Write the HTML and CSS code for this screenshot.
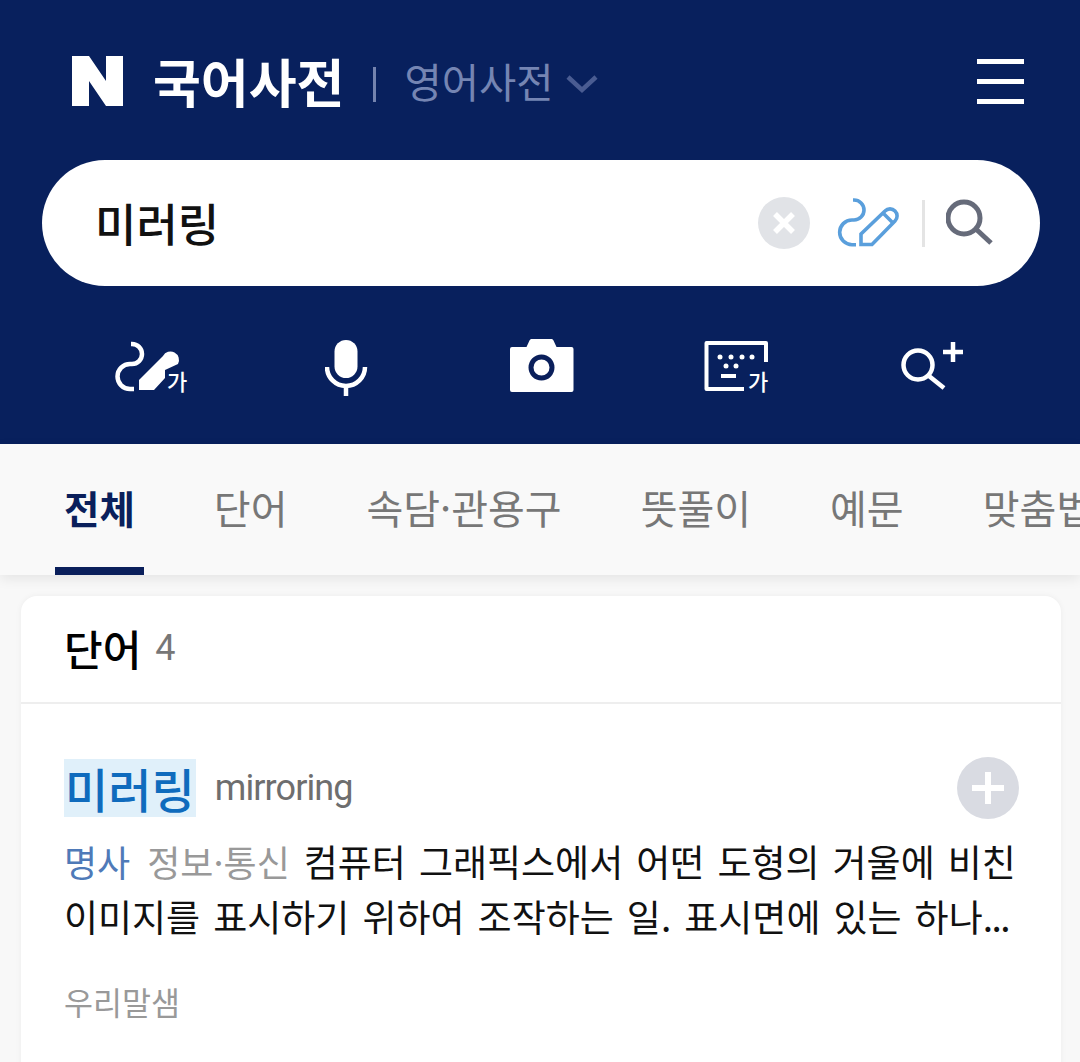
FILE: index.html
```html
<!DOCTYPE html>
<html lang="ko">
<head>
  <meta charset="UTF-8">
  <meta name="viewport" content="width=device-width, initial-scale=1.0">
  <title>국어사전</title>
  <link rel="stylesheet" href="styles.css">
</head>
<body>
  <header class="top">
    <div class="brand-row">
      <svg class="logo" width="51" height="50" viewBox="0 0 51 50"><path fill="#fff" d="M0 0h17l17 25V0h17v50H34L17 25v25H0z"/></svg>
      <h1 class="brand-name">국어사전</h1>
      <span class="brand-sep"></span>
      <span class="brand-other">영어사전</span>
      <svg class="chevron" width="32" height="20" viewBox="0 0 32 20"><path fill="none" stroke="#4a5c92" stroke-width="4.5" d="M2 3l14 13L30 3"/></svg>
      <div class="menu"><span></span><span></span><span></span></div>
    </div>

    <div class="search">
      <span class="search-text">미러링</span>
      <svg class="clear" width="52" height="52" viewBox="0 0 52 52"><circle cx="26" cy="26" r="26" fill="#e1e3e7"/><path stroke="#fff" stroke-width="5.500" d="M17 17l18 18M35 17L17 35"/></svg>
      <svg class="pen" width="62" height="52" viewBox="0 0 62 52"><g fill="none" stroke="#5a9fdc" stroke-width="3.600"><path d="M16 3h1a10 10 0 0 1 0 20h-2a12.300 12.300 0 0 0 0 24.700h4"/><path d="M24 47.500V37L48 14a7 7 0 0 1 10 0 7 7 0 0 1 0 10L35 47.500z"/><path d="M46 16l10 10"/></g></svg>
      <span class="search-sep"></span>
      <svg class="glass" width="48" height="48" viewBox="0 0 48 48"><g fill="none" stroke="#666b7a" stroke-width="5"><circle cx="18" cy="19" r="16"/><path d="M31 31l14 13"/></g></svg>
    </div>

    <div class="tools">
      <div class="tool">
        <svg width="80" height="60" viewBox="0 0 80 60"><path fill="none" stroke="#fff" stroke-width="4.500" d="M18 7h1a10 10 0 0 1 0 20h-2a12.500 12.500 0 0 0 0 25h4"/><path fill="#fff" d="M26 43l24-24a8.500 8.500 0 0 1 15 8l-13 6v8L41 53H26z"/><text class="tool-ga" x="54" y="53">가</text></svg>
      </div>
      <div class="tool">
        <svg width="46" height="60" viewBox="2 0 46 60"><rect x="11.500" y="3" width="23" height="38" rx="11.500" fill="#fff"/><path fill="none" stroke="#fff" stroke-width="4.500" d="M4 30a19 19 0 0 0 38 0M23 49v10"/></svg>
      </div>
      <div class="tool">
        <svg width="68" height="60" viewBox="-1 0 68 60"><path fill="#fff" d="M2 10h14.500l3-6.500a2 2 0 0 1 2-1.500h20a2 2 0 0 1 2 1.500l3 6.500h15a2 2 0 0 1 2 2v41a2 2 0 0 1-2 2H2a2 2 0 0 1-2-2V12a2 2 0 0 1 2-2z"/><circle cx="31.500" cy="30.500" r="10.500" fill="#fff" stroke="#0a1f5b" stroke-width="5"/></svg>
      </div>
      <div class="tool">
        <svg width="68" height="60" viewBox="0 0 68 60"><path fill="none" stroke="#fff" stroke-width="4" stroke-linejoin="round" d="M62 25V6H2.500v46H40"/><path stroke="#fff" stroke-width="4" d="M17 39h15"/><g fill="#fff"><circle cx="16" cy="20" r="2.500"/><circle cx="27" cy="20" r="2.500"/><circle cx="38" cy="20" r="2.500"/><circle cx="48" cy="20" r="2.500"/><circle cx="22" cy="29" r="2.500"/><circle cx="32" cy="29" r="2.500"/></g><text class="tool-ga" x="44" y="53">가</text></svg>
      </div>
      <div class="tool">
        <svg width="66" height="60" viewBox="3 0 66 60"><g fill="none" stroke="#fff" stroke-width="4.500"><circle cx="21" cy="28" r="14.500"/><path d="M32 39l15 12"/><path d="M56 5v20M46 15h20"/></g></svg>
      </div>
    </div>
  </header>

  <nav class="tabs">
    <a class="tab active">전체</a>
    <a class="tab">단어</a>
    <a class="tab">속담·관용구</a>
    <a class="tab">뜻풀이</a>
    <a class="tab">예문</a>
    <a class="tab">맞춤법</a>
  </nav>

  <section class="card">
    <div class="card-head">
      <h2>단어</h2>
      <span class="count">4</span>
    </div>
    <div class="entry">
      <div class="entry-title">
        <strong class="word">미러링</strong>
        <span class="orig">mirroring</span>
        <svg class="add" width="62" height="62" viewBox="0 0 62 62"><circle cx="31" cy="31" r="31" fill="#d9dbe2"/><path stroke="#fff" stroke-width="6" d="M31 15v32M15 31h32"/></svg>
      </div>
      <p class="def"><span class="pos">명사</span><span class="field">정보·통신</span><span class="def-text">컴퓨터 그래픽스에서 어떤 도형의 거울에 비친 이미지를 표시하기 위하여 조작하는 일. 표시면에 있는 하나<span class="more">...</span></span></p>
      <div class="source">우리말샘</div>
    </div>
  </section>
</body>
</html>
```

FILE: styles.css
```css
* {
  box-sizing: border-box;
}
html, body {
  height: 100%;
  overflow: hidden;
}
body {
  margin: 0;
  background-color: #f8f8f8;
  font-family: "Noto Sans CJK KR", "Noto Sans", sans-serif;
}
.top {
  height: 444px;
  padding-top: 56px;
  background-color: #08205d;
}
.brand-row {
  display: flex;
  align-items: center;
  height: 50px;
  padding: 0 56px 0 72px;
}
.brand-name {
  margin: 0 0 0 30px;
  color: #fff;
  font-size: 52px;
  font-weight: 700;
  line-height: 46px;
}
.brand-sep {
  width: 3px;
  height: 35px;
  margin: 6px 28px 0 29px;
  background-color: #7483ae;
}
.brand-other {
  color: #7585b3;
  font-size: 40.500px;
  line-height: 48px;
}
.chevron {
  margin: 6px 0 0 13px;
}
.menu {
  display: flex;
  flex-direction: column;
  gap: 15px;
  width: 47px;
  margin-left: auto;
}
.menu span {
  height: 5px;
  background-color: #fff;
}
.search {
  display: flex;
  align-items: center;
  height: 126px;
  margin: 54px 40px 0 42px;
  padding: 0 46px 0 53px;
  border-radius: 63px;
  background-color: #fff;
}
.search-text {
  flex: 1;
  padding-bottom: 2px;
  color: #111;
  font-size: 45px;
  font-weight: 500;
}
.clear {
  margin-right: 27px;
}
.search-sep {
  width: 3px;
  height: 47px;
  margin: 0 21px 0 23px;
  background-color: #e4e4e4;
}
.tools {
  display: grid;
  grid-template-columns: repeat(5, 195px);
  height: 60px;
  margin-top: 51px;
  padding-left: 55px;
}
.tool {
  display: flex;
  justify-content: center;
}
.tool-ga {
  fill: #fff;
  font-size: 22px;
  font-weight: 500;
}
.tabs {
  position: relative;
  display: flex;
  gap: 61px;
  height: 131px;
  padding-left: 55px;
  overflow: hidden;
  background-color: #f9f9f9;
  box-shadow: 0 4px 12px rgba(0, 0, 0, 0.08);
}
.tab {
  flex: none;
  padding: 0 9px;
  color: #777;
  font-size: 40px;
  line-height: 126px;
}
.tab.active {
  border-bottom: 8px solid #0a1f5b;
  color: #0a1f5b;
  font-size: 38.500px;
  font-weight: 700;
}
.card {
  margin: 21px 19px 0 21px;
  padding-bottom: 80px;
  border-radius: 16px 16px 0 0;
  background-color: #fff;
  box-shadow: 0 0 6px rgba(0, 0, 0, 0.05);
}
.card-head {
  display: flex;
  align-items: center;
  gap: 14px;
  height: 108px;
  padding: 0 0 4px 43px;
  border-bottom: 2px solid #eee;
}
.card-head h2 {
  margin: 0;
  color: #000;
  font-size: 42px;
  font-weight: 500;
}
.count {
  padding-top: 2px;
  color: #777;
  font-size: 36px;
  font-family: Roboto, sans-serif;
}
.entry {
  padding: 53px 42px 0 43px;
}
.entry-title {
  display: flex;
  align-items: center;
  height: 62px;
}
.word {
  padding: 0 1px;
  background-color: #e0f0fa;
  color: #0f6bbd;
  font-size: 47px;
  font-weight: 500;
  line-height: 58px;
}
.orig {
  margin-left: 19px;
  color: #6e6e6e;
  font-family: Roboto, sans-serif;
  font-size: 36px;
  letter-spacing: -0.900px;
}
.add {
  margin-left: auto;
}
.def {
  margin: 15px 0 0 0;
  color: #111;
  font-size: 36px;
  line-height: 55px;
}
.pos {
  margin-right: 17px;
  color: #4f7ab8;
}
.field {
  margin-right: 14px;
  color: #999;
}
.def-text {
  font-size: 37px;
  word-spacing: 2.700px;
}
.more {
  letter-spacing: -1.500px;
}
.source {
  margin-top: 34px;
  color: #999;
  font-size: 31.500px;
}
```
